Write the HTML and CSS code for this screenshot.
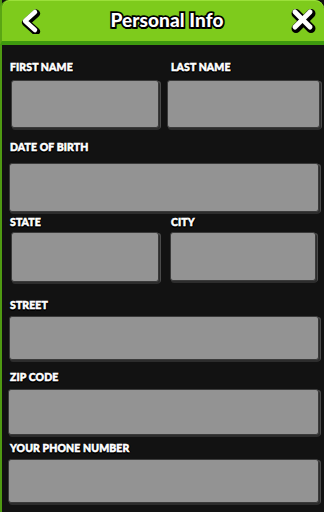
FILE: index.html
```html
<!DOCTYPE html>
<html>
<head>
<meta charset="utf-8">
<link rel="stylesheet" href="styles.css">
</head>
<body>
<div class="screen">
  <header class="topbar">
    <svg class="icon back" width="22" height="26" viewBox="0 0 22 26">
      <polyline points="16,4 6,13 16,22" fill="none" stroke="#000" stroke-width="8" stroke-linecap="round" stroke-linejoin="round" transform="translate(1,1.5)"/>
      <polyline points="16,4 6,13 16,22" fill="none" stroke="#fff" stroke-width="4.5" stroke-linecap="round" stroke-linejoin="round"/>
    </svg>
    <h1 class="title">Personal Info</h1>
    <svg class="icon close" width="28" height="28" viewBox="0 0 28 28">
      <g transform="translate(1,1.5)" stroke="#000" stroke-width="9" stroke-linecap="round">
        <line x1="6" y1="6" x2="21" y2="21"/><line x1="21" y1="6" x2="6" y2="21"/>
      </g>
      <g stroke="#fff" stroke-width="5" stroke-linecap="round">
        <line x1="6" y1="6" x2="21" y2="21"/><line x1="21" y1="6" x2="6" y2="21"/>
      </g>
    </svg>
  </header>
  <main class="form">
    <div class="row r1">
      <div class="field f-first"><div class="label">FIRST NAME</div><div class="input h48"></div></div>
      <div class="field f-last"><div class="label">LAST NAME</div><div class="input h48"></div></div>
    </div>
    <div class="field f-dob"><div class="label">DATE OF BIRTH</div><div class="input h49"></div></div>
    <div class="row r2">
      <div class="field f-state"><div class="label">STATE</div><div class="input h50"></div></div>
      <div class="field f-city"><div class="label">CITY</div><div class="input h49"></div></div>
    </div>
    <div class="field f-street"><div class="label">STREET</div><div class="input h44"></div></div>
    <div class="field f-zip"><div class="label">ZIP CODE</div><div class="input h46"></div></div>
    <div class="field f-phone"><div class="label">YOUR PHONE NUMBER</div><div class="input h44"></div></div>
  </main>
</div>
</body>
</html>
```

FILE: styles.css
```css
* { box-sizing: border-box; margin: 0; padding: 0; }
html, body { width: 324px; height: 512px; overflow: hidden; }
body { background: #121212; font-family: "Lato", "Liberation Sans", sans-serif; }
.screen {
  height: 512px;
  border-left: 2px solid #4f9a12;
  background: #121212;
}
.topbar {
  height: 45px;
  background: #7ecb1c;
  border-bottom: 4px solid #3e9a0e;
  border-top-left-radius: 9px;
  border-top-right-radius: 9px;
  box-shadow: inset 0 1px 0 #9be03a;
  display: flex;
  align-items: center;
  justify-content: space-between;
  padding: 0 7px 0 17px;
  margin-left: -2px;
  border-left: 2px solid #5aa514;
}
.icon { display: block; }
.close { margin-top: -1px; }
.title {
  font-family: "Lato", "Liberation Sans", sans-serif;
  font-weight: 900;
  font-size: 19px;
  color: #fff;
  letter-spacing: 0.1px;
  -webkit-text-stroke: 3.5px #000;
  paint-order: stroke fill;
  text-shadow: 0 2px 0 #000, 1px 2px 0 #000;
  margin-top: -3px;
  margin-left: 4px;
}
.form { padding: 16px 3px 0 7px; }
.row { display: flex; }
.label {
  font-weight: 900;
  font-size: 10.5px;
  line-height: 12px;
  color: #fff;
  letter-spacing: 0.1px;
  -webkit-text-stroke: 0.5px #fff;
  text-shadow: 1px 1px 0 #000, 0 1.5px 0 #000, 1.5px 0 0 #000, -0.5px 0.5px 0 #000;
  padding-left: 1px;
}
.input {
  background: #939393;
  border: 1px solid #3a3a3a;
  border-radius: 3px;
  box-shadow: 1px 2px 0 #2c2c2c, 2px 1px 0 #4a4a4a;
}
.h44 { height: 44px; }
.h46 { height: 46px; }
.h48 { height: 48px; }
.h49 { height: 49px; }
.h50 { height: 50px; }

.f-first { width: 150px; }
.f-first .input { margin: 7px 0 0 2px; width: 148px; }
.f-last { width: 155px; margin-left: 11px; }
.f-last .input { margin: 7px 0 0 -3px; width: 153px; }

.f-dob { margin-top: 13px; }
.f-dob .input { margin-top: 10px; width: 310px; }

.r2 { margin-top: 4px; }
.f-state { width: 150px; }
.f-state .input { margin: 4px 0 0 2px; width: 148px; }
.f-city { width: 150px; margin-left: 11px; }
.f-city .input { margin: 4px 0 0 0; width: 146px; }

.f-street { margin-top: 17px; }
.f-street .input { margin-top: 5px; width: 310px; }
.f-zip { margin-top: 11px; }
.f-zip .input { margin: 6px 0 0 -1px; width: 311px; }
.f-phone { margin-top: 7px; }
.f-phone .input { margin: 5px 0 0 -1px; width: 311px; }
```
